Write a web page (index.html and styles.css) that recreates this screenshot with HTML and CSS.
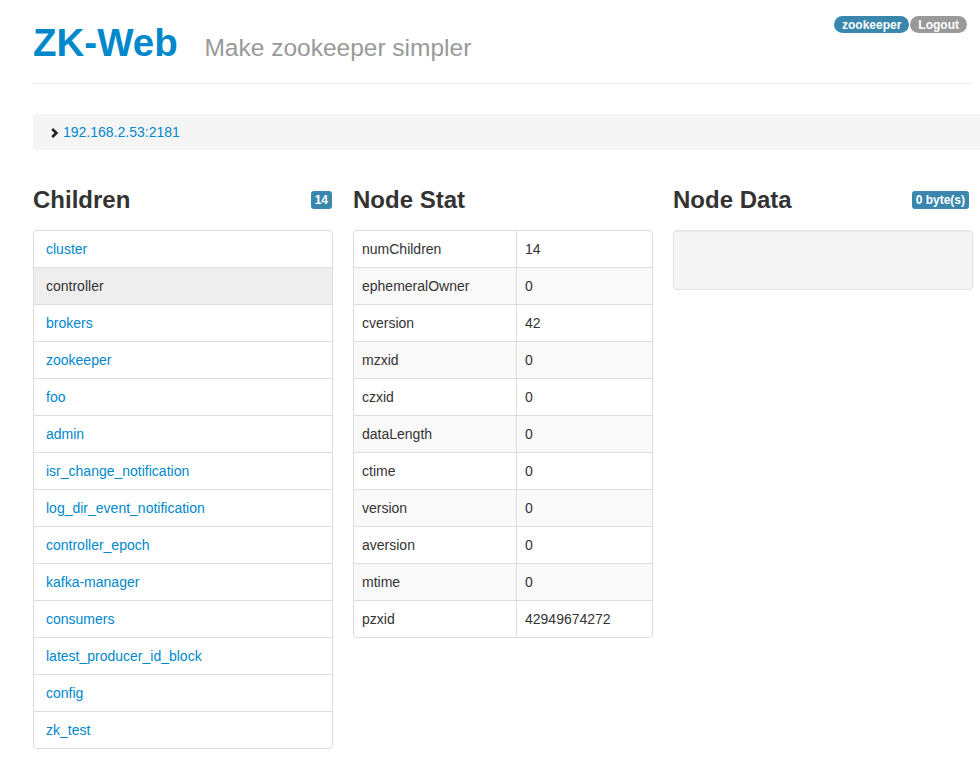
FILE: index.html
```html
<!DOCTYPE html>
<html>
<head>
<meta charset="utf-8">
<link rel="stylesheet" href="styles.css">
</head>
<body>
<div class="page">
  <header class="page-header">
    <h1 class="brand">ZK-Web <small class="tagline">Make zookeeper simpler</small></h1>
    <div class="user-badges">
      <span class="badge badge-info">zookeeper</span><span class="badge badge-muted">Logout</span>
    </div>
  </header>

  <div class="breadcrumb">
    <svg class="chev" width="10" height="10" viewBox="0 0 10 10"><path d="M2.2 1 L6.4 5 L2.2 9" fill="none" stroke="#222" stroke-width="2.6" stroke-linejoin="miter"/></svg>
    <a class="crumb" href="#">192.168.2.53:2181</a>
  </div>

  <div class="columns">
    <section class="col">
      <div class="col-head">
        <h3>Children</h3>
        <span class="label">14</span>
      </div>
      <div class="list-group">
        <a class="list-item" href="#">cluster</a>
        <a class="list-item active" href="#">controller</a>
        <a class="list-item" href="#">brokers</a>
        <a class="list-item" href="#">zookeeper</a>
        <a class="list-item" href="#">foo</a>
        <a class="list-item" href="#">admin</a>
        <a class="list-item" href="#">isr_change_notification</a>
        <a class="list-item" href="#">log_dir_event_notification</a>
        <a class="list-item" href="#">controller_epoch</a>
        <a class="list-item" href="#">kafka-manager</a>
        <a class="list-item" href="#">consumers</a>
        <a class="list-item" href="#">latest_producer_id_block</a>
        <a class="list-item" href="#">config</a>
        <a class="list-item" href="#">zk_test</a>
      </div>
    </section>

    <section class="col">
      <div class="col-head">
        <h3>Node Stat</h3>
      </div>
      <div class="table-wrap">
        <table class="stat">
          <tbody>
            <tr><td>numChildren</td><td>14</td></tr>
            <tr><td>ephemeralOwner</td><td>0</td></tr>
            <tr><td>cversion</td><td>42</td></tr>
            <tr><td>mzxid</td><td>0</td></tr>
            <tr><td>czxid</td><td>0</td></tr>
            <tr><td>dataLength</td><td>0</td></tr>
            <tr><td>ctime</td><td>0</td></tr>
            <tr><td>version</td><td>0</td></tr>
            <tr><td>aversion</td><td>0</td></tr>
            <tr><td>mtime</td><td>0</td></tr>
            <tr><td>pzxid</td><td>42949674272</td></tr>
          </tbody>
        </table>
      </div>
    </section>

    <section class="col">
      <div class="col-head">
        <h3>Node Data</h3>
        <span class="label label-data">0 byte(s)</span>
      </div>
      <div class="well"></div>
    </section>
  </div>
</div>
</body>
</html>
```

FILE: styles.css
```css
html, body {
  margin: 0;
  padding: 0;
  background: #fff;
  overflow-x: hidden;
}

body {
  font-family: "Liberation Sans", Arial, sans-serif;
  font-size: 14px;
  line-height: 20px;
  color: #333;
}

a {
  color: #0088cc;
  text-decoration: none;
}

.page {
  width: 940px;
  padding-left: 33px;
}

.page-header {
  display: flex;
  justify-content: space-between;
  align-items: flex-start;
  padding-top: 16px;
  padding-bottom: 18px;
  border-bottom: 1px solid #eee;
}

.brand {
  margin: 5px 0 0 0;
  height: 44px;
  font-size: 38.5px;
  line-height: 44px;
  font-weight: bold;
  color: #0088cc;
  white-space: nowrap;
}

.tagline {
  font-size: 24.5px;
  line-height: 0;
  font-weight: normal;
  color: #999;
  margin-left: 16px;
}

.user-badges {
  display: flex;
  margin-right: 6px;
}

.badge {
  display: inline-block;
  font-size: 12px;
  font-weight: bold;
  line-height: 12px;
  color: #fff;
  padding: 3px 8px 2px;
  border-radius: 9px;
  height: 12px;
}

.badge-info {
  background: #3a87ad;
}

.badge-muted {
  background: #999;
  margin-left: 1px;
}

.breadcrumb {
  display: flex;
  align-items: center;
  height: 36px;
  margin-top: 30px;
  margin-right: -7px;
  padding-left: 17px;
  background: #f5f5f5;
  border-radius: 4px 0 0 4px;
}

.chev {
  display: block;
  margin-right: 3px;
  margin-top: 1px;
}

.crumb {
  font-size: 14px;
}

.columns {
  display: flex;
  gap: 20px;
  margin-top: 37px;
}

.col {
  width: 300px;
}

.col-head {
  display: flex;
  justify-content: space-between;
  align-items: center;
  height: 26px;
  margin-bottom: 17px;
}

.col-head h3 {
  margin: 0;
  font-size: 24px;
  line-height: 26px;
  font-weight: bold;
  color: #333;
}

.label {
  display: inline-block;
  background: #3a87ad;
  color: #fff;
  font-size: 12px;
  font-weight: bold;
  line-height: 12px;
  padding: 3px 4px;
  border-radius: 3px;
  margin-right: 1px;
}

.label-data {
  margin-right: 4px;
  padding: 3px 4px;
}

.list-group {
  border: 1px solid #ddd;
  border-radius: 4px;
  overflow: hidden;
}

.list-item {
  display: block;
  padding: 8px 12px;
  line-height: 20px;
  border-top: 1px solid #ddd;
  color: #0088cc;
}

.list-item:first-child {
  border-top: none;
}

.list-item.active {
  background: #eee;
  color: #333;
}

.table-wrap {
  border: 1px solid #ddd;
  border-radius: 4px;
  overflow: hidden;
}

.stat {
  width: 100%;
  border-collapse: collapse;
}

.stat td {
  padding: 8px;
  line-height: 20px;
  border-top: 1px solid #ddd;
  color: #333;
}

.stat tr:first-child td {
  border-top: none;
}

.stat td:first-child {
  width: 146px;
  border-right: 1px solid #ddd;
}

.stat tr:nth-child(even) td {
  background: #f9f9f9;
}

.well {
  height: 58px;
  background: #f5f5f5;
  border: 1px solid #e3e3e3;
  border-radius: 4px;
  box-shadow: inset 0 1px 1px rgba(0,0,0,0.05);
}
```
